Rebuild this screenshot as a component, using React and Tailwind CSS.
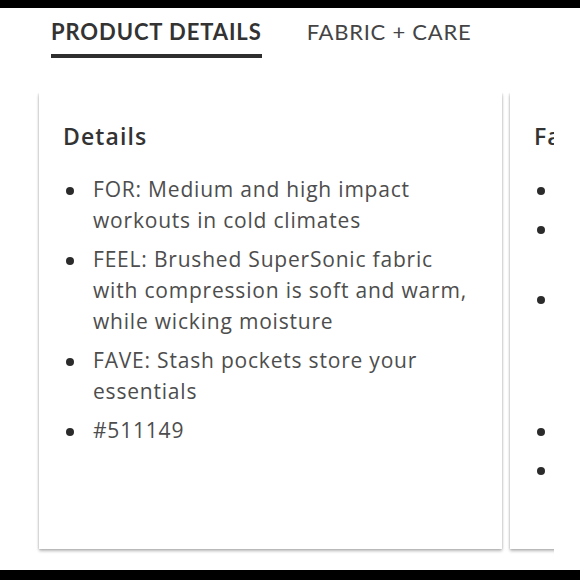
import React from 'react';

const details = [
    'FOR: Medium and high impact workouts in cold climates',
    'FEEL: Brushed SuperSonic fabric with compression is soft and warm, while wicking moisture',
    'FAVE: Stash pockets store your essentials',
    '#511149',
];

const fabric = [
    'Body: 77% nylon, 23% elastane',
    'Fabric: SuperSonic, brushed for warmth and softness',
    'Care: Machine wash cold, do not bleach, tumble dry low, do not iron, do not dry clean, use mild detergent only',
    'Wash with like colours',
    'Imported',
];

const Card = ({ title, items }) => (
    <div className="w-[463px] h-[456px] shrink-0 bg-white pl-6 pr-6 pt-[29px] shadow-[0_2px_3px_rgba(0,0,0,0.28),0_0_2px_rgba(0,0,0,0.18)]">
        <h3 className="text-[23px] leading-[28px] font-semibold text-[#333] tracking-[1.1px]">{title}</h3>
        <ul className="mt-6 flex flex-col gap-2">
            {items.map((item) => (
                <li key={item} className="flex text-[21px] leading-[31px] text-[#4d4d4d] tracking-[0.8px]">
                    <span className="w-2 h-2 shrink-0 rounded-full bg-[#2b2b2b] ml-[3px] mr-[19px] mt-[13px]"></span>
                    <span>{item}</span>
                </li>
            ))}
        </ul>
    </div>
);

export default function App() {
    return (
        <div className="w-[580px] h-[580px] flex flex-col bg-white overflow-hidden" style={{ fontFamily: '"Open Sans", Lato, sans-serif' }}>
            <div className="h-2 bg-black shrink-0"></div>

            {/* Tabs */}
            <div className="flex items-start pl-[51px] pt-[11px] gap-[45px]" style={{ fontFamily: 'Lato, "Open Sans", sans-serif' }}>
                <div className="border-b-4 border-[#2e2e2e] pb-[9px] text-[22px] leading-[26px] font-bold text-[#333] tracking-[0.9px]">
                    PRODUCT DETAILS
                </div>
                <div className="text-[22px] leading-[26px] text-[#444] tracking-[0.75px]">FABRIC + CARE</div>
            </div>

            {/* Cards */}
            <div className="w-[554px] mt-[35px] overflow-hidden pb-2">
                <div className="flex gap-2 pl-[39px]">
                    <Card title="Details" items={details} />
                    <Card title="Fabric" items={fabric} />
                </div>
            </div>

            <div className="flex-1"></div>
            <div className="h-[10px] bg-black shrink-0"></div>
        </div>
    );
}
